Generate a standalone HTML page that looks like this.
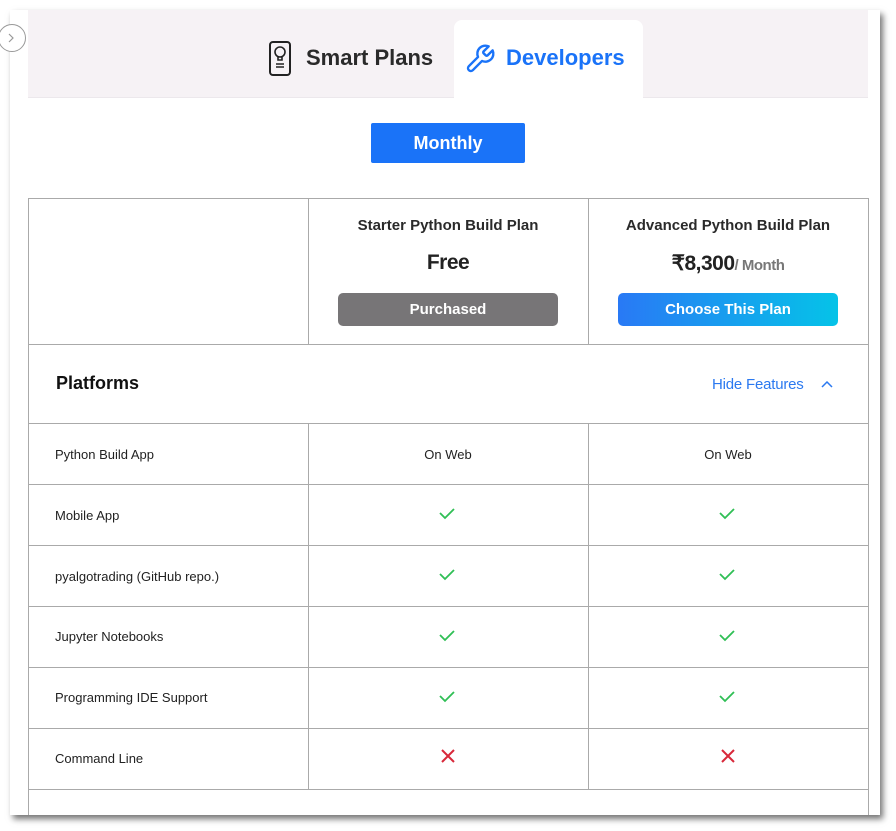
<!DOCTYPE html>
<html><head><style>
body{margin:0;width:896px;height:831px;background:#fff;position:relative;overflow:hidden;font-family:"Liberation Sans",sans-serif;}
.win{position:absolute;left:10px;top:10px;width:870px;height:805px;background:#fff;box-shadow:3px 4px 6px rgba(0,0,0,.55);overflow:hidden;}
.tabs{position:absolute;left:18px;top:0;width:840px;height:87px;background:#f6f2f5;border-bottom:1px solid #ece8ec;}
.tab{position:absolute;font-weight:bold;font-size:22px;}
.dev{position:absolute;left:426px;top:10px;width:189px;height:78px;background:#fff;border-radius:8px 8px 0 0;}
.monthly{position:absolute;left:361px;top:113px;width:154px;height:40px;background:#1a73f8;border-radius:2px;color:#fff;font-weight:bold;font-size:18px;text-align:center;line-height:40px;}
.tbl{position:absolute;left:18px;top:188px;width:839px;height:640px;border:1px solid #aaa;}
.h{position:absolute;background:#aaa;height:1px;left:0;width:840px;}
.v{position:absolute;background:#aaa;width:1px;}
.c{position:absolute;text-align:center;width:280px;}
.lbl{position:absolute;left:26px;font-size:13px;color:#222;}
</style></head><body>
<div class="win">
<div class="tabs">
 <svg style="position:absolute;left:239px;top:30px" width="26" height="38" viewBox="0 0 26 38"><rect x="3" y="2" width="20" height="33" rx="3" fill="none" stroke="#222" stroke-width="2"/><circle cx="13" cy="12" r="5" fill="none" stroke="#222" stroke-width="1.6"/><path d="M11 17v3h4v-3M9 24h8M9 27h8" stroke="#222" stroke-width="1.6" fill="none"/></svg>
 <div class="tab" style="left:278px;top:35px;color:#2a2a2a">Smart Plans</div>
 <div class="dev"></div>
 <svg style="position:absolute;left:436px;top:33px" width="32" height="32" viewBox="0 0 24 24"><path d="M14.7 6.3a1 1 0 000 1.4l1.6 1.6a1 1 0 001.4 0l3.77-3.77a6 6 0 01-7.94 7.94l-6.91 6.91a2.12 2.12 0 01-3-3l6.91-6.91a6 6 0 017.94-7.94l-3.76 3.76z" fill="none" stroke="#1a73f8" stroke-width="1.8" stroke-linejoin="round"/></svg>
 <div class="tab" style="left:478px;top:35px;color:#1a73f8">Developers</div>
</div>
<div class="monthly">Monthly</div>
<div class="tbl">
 <div class="v" style="left:279px;top:0;height:590px"></div>
 <div class="v" style="left:559px;top:0;height:590px"></div>
 <div class="h" style="top:145px"></div>
 <div style="position:absolute;left:0;top:146px;width:839px;height:78px;background:#fff"></div>
 <div class="h" style="top:224px"></div>
 <div class="h" style="top:285px"></div>
 <div class="h" style="top:346px"></div>
 <div class="h" style="top:407px"></div>
 <div class="h" style="top:468px"></div>
 <div class="h" style="top:529px"></div>
 <div class="h" style="top:590px"></div>
 <div class="c" style="left:279px;top:18px;font-weight:bold;font-size:15px;color:#2a2a2a">Starter Python Build Plan</div>
 <div class="c" style="left:559px;top:18px;font-weight:bold;font-size:15px;color:#2a2a2a">Advanced Python Build Plan</div>
 <div class="c" style="left:279px;top:52px;font-weight:bold;font-size:21px;color:#222;letter-spacing:-.5px">Free</div>
 <div class="c" style="left:559px;top:52px;font-weight:bold;font-size:21px;color:#222;letter-spacing:-.5px">₹8,300<span style="font-size:15px;color:#777;font-weight:bold">/ Month</span></div>
 <div style="position:absolute;left:309px;top:94px;width:220px;height:33px;background:#777577;border-radius:5px;color:#fff;font-weight:bold;font-size:15px;text-align:center;line-height:34px">Purchased</div>
 <div style="position:absolute;left:589px;top:94px;width:220px;height:33px;background:linear-gradient(90deg,#2979f5,#05c3e8);border-radius:5px;color:#fff;font-weight:bold;font-size:15px;text-align:center;line-height:34px">Choose This Plan</div>
 <div style="position:absolute;left:27px;top:174px;font-weight:bold;font-size:18px;color:#111">Platforms</div>
 <div style="position:absolute;left:683px;top:177px;font-size:15px;color:#2b79f0;letter-spacing:-.2px">Hide Features</div>
 <svg style="position:absolute;left:791px;top:179px" width="14" height="12" viewBox="0 0 14 12"><path d="M2 9l5-5 5 5" fill="none" stroke="#2b79f0" stroke-width="1.5"/></svg>
 <div class="lbl" style="top:248px">Python Build App</div>
 <div class="c" style="left:279px;top:248px;font-size:13px;color:#222">On Web</div>
 <div class="c" style="left:559px;top:248px;font-size:13px;color:#222">On Web</div>
 <div class="lbl" style="top:309px">Mobile App</div>
 <div class="lbl" style="top:370px">pyalgotrading (GitHub repo.)</div>
 <div class="lbl" style="top:430px">Jupyter Notebooks</div>
 <div class="lbl" style="top:491px">Programming IDE Support</div>
 <div class="lbl" style="top:552px">Command Line</div>
 <svg style="position:absolute;left:0;top:0" width="840" height="600">
  <g fill="none" stroke="#2fbf55" stroke-width="1.8">
   <path d="M411 314l5 5 9-9M691 314l5 5 9-9"/>
   <path d="M411 375l5 5 9-9M691 375l5 5 9-9"/>
   <path d="M411 436l5 5 9-9M691 436l5 5 9-9"/>
   <path d="M411 497l5 5 9-9M691 497l5 5 9-9"/>
  </g>
  <g stroke="#d8283a" stroke-width="2">
   <path d="M413 551l12 12M425 551l-12 12M693 551l12 12M705 551l-12 12"/>
  </g>
 </svg>
</div>
</div>
<div style="position:absolute;left:-2px;top:24px;width:26px;height:26px;border:1px solid #999;border-radius:50%;background:#fff;"></div>
<svg style="position:absolute;left:8px;top:33px" width="8" height="10" viewBox="0 0 8 10"><path d="M1 1l4 4-4 4" fill="none" stroke="#999" stroke-width="1.2"/></svg>
</body></html>
